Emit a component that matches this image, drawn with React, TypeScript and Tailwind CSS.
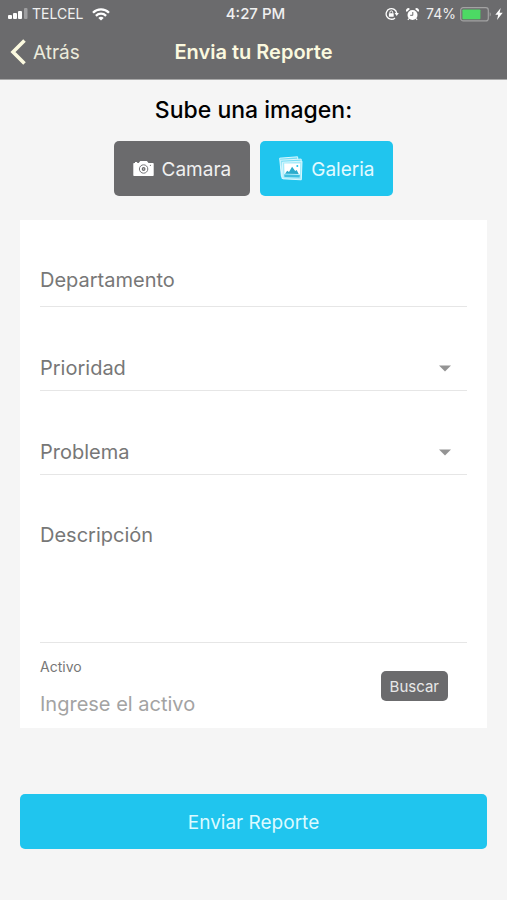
import React from "react";

function SignalIcon() {
  return (
    <svg width="20" height="12" viewBox="0 0 20 12" fill="#fff" aria-hidden="true">
      <rect x="0" y="7" width="4" height="4" rx="1" />
      <rect x="5" y="5" width="4" height="6" rx="1" />
      <rect x="10" y="3" width="4" height="8" rx="1" />
      <rect x="16" y="0" width="3.5" height="11" rx="1" opacity="0.35" />
    </svg>
  );
}

function WifiIcon() {
  return (
    <svg width="18" height="13" viewBox="0 0 18 13" fill="none" stroke="#fff" strokeWidth="2.3" aria-hidden="true">
      <path d="M1 4.8C5.4.3 12.6.3 17 4.8" />
      <path d="M3.9 7.8c2.9-2.8 7.3-2.8 10.2 0" />
      <path d="M9 12.6 6.3 9.9c1.5-1.4 3.9-1.4 5.4 0Z" fill="#fff" stroke="none" />
    </svg>
  );
}

function RotationLockIcon() {
  return (
    <svg width="14" height="14" viewBox="0 0 14 14" fill="none" stroke="#fff" aria-hidden="true">
      <path d="M11.7 6.2A5.3 5.3 0 1 0 10 10.9" strokeWidth="1.3" />
      <path d="M9.6 6h4.2l-2.1 3Z" fill="#fff" stroke="none" />
      <rect x="3.9" y="6.2" width="4.8" height="3.6" rx=".5" fill="#fff" stroke="none" />
      <path d="M4.9 6.4V5.3a1.4 1.4 0 0 1 2.8 0v1.1" strokeWidth="1" />
    </svg>
  );
}

function AlarmIcon() {
  return (
    <svg width="13" height="13" viewBox="0 0 13 13" aria-hidden="true">
      <circle cx="6.5" cy="7" r="5" fill="#fff" />
      <path d="M.7 3.9A2.1 2.1 0 0 1 3.9.9ZM12.3 3.9A2.1 2.1 0 0 0 9.1.9Z" fill="#fff" />
      <path d="m3 10.5-1.1 1.4M10 10.5l1.1 1.4" stroke="#fff" strokeWidth="1.2" />
      <path d="M6.8 4v3.3H4.2" stroke="#6b6b6d" strokeWidth="1" fill="none" />
    </svg>
  );
}

function BatteryIcon() {
  return (
    <svg width="32" height="15" viewBox="0 0 32 15" aria-hidden="true">
      <rect x=".7" y=".7" width="27.6" height="13.2" rx="2.5" fill="none" stroke="#a3a3a3" strokeWidth="1.2" />
      <rect x="2.4" y="2.4" width="18" height="9.8" rx=".8" fill="#4cd964" />
      <path d="M29.7 5.2c1.5.6 1.5 3.8 0 4.4Z" fill="#a3a3a3" />
    </svg>
  );
}

function BoltIcon() {
  return (
    <svg width="8" height="12" viewBox="0 0 8 12" fill="#fff" aria-hidden="true">
      <path d="M5.7 0 .3 6.8h2.9L2 12l5.7-7.2H4.6Z" />
    </svg>
  );
}

function CameraIcon() {
  return (
    <svg width="21" height="17" viewBox="0 0 21 17" aria-hidden="true">
      <path d="M1.3 3h4.4L7.3.9h6.6L15.5 3h4.2c.6 0 1 .4 1 1v11c0 .6-.4 1-1 1H1.3c-.6 0-1-.4-1-1V4c0-.6.4-1 1-1Z" fill="#fff" />
      <path d="M2 2h2.2v1H2Z" fill="#fff" />
      <circle cx="10.6" cy="9" r="4.2" fill="none" stroke="#77777a" strokeWidth="1" />
      <circle cx="10.6" cy="9" r="1.9" fill="#6b6b6d" />
      <circle cx="10.6" cy="9" r=".7" fill="#d4d4d4" />
      <circle cx="17.4" cy="5.3" r=".6" fill="#6b6b6d" />
    </svg>
  );
}

function GalleryIcon() {
  return (
    <svg width="24" height="25" viewBox="0 0 24 25" aria-hidden="true">
      <g fill="#74dcf4" stroke="#d9f8ff" strokeWidth="1">
        <path d="M.7 2.2 18.6.8l1.5 18L2.4 20.4Z" />
        <path d="m1.6 4.2 20.6-1.1-.6 18.8L3 22.5Z" />
        <path d="m3.4 6.2 19.6-1-.7 18.6-18.4-1Z" fill="#a6ebfa" />
      </g>
      <path d="m5.2 7.6 16-.1-.3 10.8-15.4-.2Z" fill="#fff" />
      <path d="m6 17.8 2.2-3.1 1.8 1.2 3.1-5.2 3.1 4.4 1.5-1.2 2 4.1Z" fill="#2aaccc" />
      <path d="m5.2 18.6 15.6.3-.2 2.6-15.1-.5Z" fill="#3fc0e0" />
      <circle cx="18.3" cy="10" r="1" fill="#20c5ee" />
    </svg>
  );
}

function StatusBar() {
  return (
    <div className="grid h-7 grid-cols-[1fr_auto_1fr] items-center text-[14px] leading-5 text-[#f0f0f0]">
      <div className="flex items-center gap-1 pl-2">
        <SignalIcon />
        <span className="pr-1">TELCEL</span>
        <WifiIcon />
      </div>
      <span className="pl-1 text-[15px] font-medium">4:27 PM</span>
      <div className="flex items-center justify-end pr-1">
        <RotationLockIcon />
        <span className="w-[7px]" />
        <AlarmIcon />
        <span className="pr-1 pl-[7px]">74%</span>
        <BatteryIcon />
        <span className="w-[3px]" />
        <BoltIcon />
      </div>
    </div>
  );
}

function SelectField({ id, label }: { id: string; label: string }) {
  return (
    <div className="flex h-[84px] items-end border-b border-[#e6e6e6] pb-2">
      <label htmlFor={id} className="leading-7">{label}</label>
      <div className="flex h-7 flex-1 items-center pr-4">
        <select id={id} defaultValue="" className="h-7 min-w-0 flex-1 appearance-none bg-transparent outline-none">
          <option value="" />
        </select>
        <svg width="12" height="7" viewBox="0 0 12 7" fill="#949494" aria-hidden="true">
          <path d="M0 .5h12l-6 6Z" />
        </svg>
      </div>
    </div>
  );
}

export default function App() {
  return (
    <div className="min-h-screen bg-[#f5f5f5] pb-12 font-[Inter,'Liberation_Sans',sans-serif] text-[20px]">
      <header className="border-b border-[#a8a8a8] bg-[#6b6b6d]">
        <StatusBar />
        <div className="grid h-[51px] grid-cols-[1fr_auto_1fr] items-center pb-1 text-[#fbf9df]">
          <button type="button" className="flex items-center gap-[7px] pl-[10px] text-[19px] leading-7 text-[#ecebdc]">
            <svg width="16" height="26" viewBox="0 0 16 26" fill="none" stroke="#fbf9df" strokeWidth="3.6" aria-hidden="true">
              <path d="M14.5 1.5 3 13l11.5 11.5" />
            </svg>
            <span className="pt-0.5">Atrás</span>
          </button>
          <h1 className="font-semibold">Envia tu Reporte</h1>
        </div>
      </header>

      <main className="px-5">
        <h2 className="pt-3 text-center text-[23px] leading-9 font-medium text-black">Sube una imagen:</h2>
        <div className="mt-[13px] flex justify-center gap-[10px] text-[19px] leading-7 text-white">
          <button type="button" className="flex h-[55px] items-center gap-2 rounded-[5px] bg-[#6b6b6d] px-[19px] text-[#f0f0f0]">
            <CameraIcon />
            <span className="pt-0.5">Camara</span>
          </button>
          <button type="button" className="flex h-[55px] items-center gap-2 rounded-[5px] bg-[#20c5ee] px-[19px] text-[#e2faff]">
            <GalleryIcon />
            <span className="pt-0.5">Galeria</span>
          </button>
        </div>

        <form onSubmit={(event) => event.preventDefault()}>
          <div className="mt-6 bg-white px-5 pb-2 text-[#777777]">
            <div className="flex h-[87px] items-end border-b border-[#e6e6e6] pb-3">
              <label htmlFor="departamento" className="leading-7">Departamento</label>
              <input id="departamento" type="text" className="h-7 min-w-0 flex-1 bg-transparent pl-2 outline-none" />
            </div>
            <SelectField id="prioridad" label="Prioridad" />
            <SelectField id="problema" label="Problema" />
            <div className="flex h-[168px] flex-col border-b border-[#e6e6e6] pt-[46px]">
              <label htmlFor="descripcion" className="leading-7">Descripción</label>
              <textarea id="descripcion" className="w-full flex-1 resize-none bg-transparent outline-none" />
            </div>
            <div className="flex items-center justify-between gap-4 pt-3 pr-[19px]">
              <div className="flex min-w-0 flex-1 flex-col gap-[9px]">
                <label htmlFor="activo" className="text-[14px] leading-6">Activo</label>
                <input id="activo" type="text" placeholder="Ingrese el activo" className="h-8 w-full min-w-0 bg-transparent outline-none placeholder:text-[#a3a3a3]" />
              </div>
              <button type="button" className="mb-1 h-[30px] rounded-[5px] bg-[#6b6b6d] px-[9px] pt-0.5 text-[15px] leading-6 text-[#e8e8e8]">Buscar</button>
            </div>
          </div>
          <button type="submit" className="mt-[66px] h-[55px] w-full rounded-[5px] bg-[#20c5ee] pt-0.5 text-[19px] leading-7 text-[#dcfaff]">Enviar Reporte</button>
        </form>
      </main>
    </div>
  );
}
